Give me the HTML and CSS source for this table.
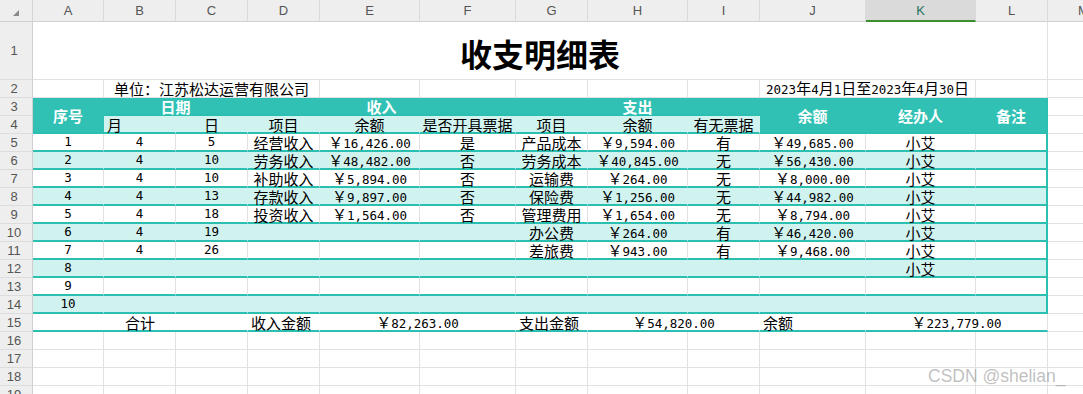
FILE: index.html
```html
<!DOCTYPE html>
<html lang="zh-CN">
<head>
<meta charset="utf-8">
<title>收支明细表</title>
<link rel="stylesheet" href="styles.css">
</head>
<body>
<div class="sheet">
  <div class="r">
    <div class="corner"><span class="tri"></span></div>
    <div class="hd">A</div><div class="hd">B</div><div class="hd">C</div><div class="hd">D</div><div class="hd">E</div><div class="hd">F</div><div class="hd">G</div><div class="hd">H</div><div class="hd">I</div><div class="hd">J</div><div class="hd sel">K</div><div class="hd">L</div><div class="hd">M</div>
  </div>
  <div class="r">
    <div class="rn">1</div><div class="c s12 title">收支明细表</div><div class="c"></div>
  </div>
  <div class="r">
    <div class="rn">2</div><div class="c"></div><div class="c s3">单位：江苏松达运营有限公司</div><div class="c"></div><div class="c"></div><div class="c"></div><div class="c"></div><div class="c"></div>
    <div class="c s2"><span><span class="n">2023</span>年<span class="n">4</span>月<span class="n">1</span>日至<span class="n">2023</span>年<span class="n">4</span>月<span class="n">30</span>日</span></div><div class="c"></div><div class="c"></div>
  </div>
  <div class="r">
    <div class="rn">3</div>
    <div class="c th rs2">序号</div><div class="c th s2">日期</div><div class="c th s3">收入</div><div class="c th s3">支出</div>
    <div class="c th rs2">余额</div><div class="c th rs2">经办人</div><div class="c th rs2 lth">备注</div><div class="c"></div>
  </div>
  <div class="r">
    <div class="rn">4</div>
    <div class="c sh left">月</div><div class="c sh">日</div><div class="c sh">项目</div><div class="c sh">余额</div><div class="c sh">是否开具票据</div><div class="c sh">项目</div><div class="c sh">余额</div><div class="c sh">有无票据</div><div class="c"></div>
  </div>
  <div class="r d">
    <div class="rn">5</div>
    <div class="c n">1</div><div class="c n">4</div><div class="c n">5</div><div class="c">经营收入</div><div class="c"><span>￥<span class="n">16,426.00</span></span></div><div class="c">是</div><div class="c">产品成本</div><div class="c"><span>￥<span class="n">9,594.00</span></span></div><div class="c">有</div><div class="c"><span>￥<span class="n">49,685.00</span></span></div><div class="c">小艾</div><div class="c lc"></div><div class="c x"></div>
  </div>
  <div class="r d a">
    <div class="rn">6</div>
    <div class="c n">2</div><div class="c n">4</div><div class="c n">10</div><div class="c">劳务收入</div><div class="c"><span>￥<span class="n">48,482.00</span></span></div><div class="c">否</div><div class="c">劳务成本</div><div class="c"><span>￥<span class="n">40,845.00</span></span></div><div class="c">无</div><div class="c"><span>￥<span class="n">56,430.00</span></span></div><div class="c">小艾</div><div class="c lc"></div><div class="c x"></div>
  </div>
  <div class="r d">
    <div class="rn">7</div>
    <div class="c n">3</div><div class="c n">4</div><div class="c n">10</div><div class="c">补助收入</div><div class="c"><span>￥<span class="n">5,894.00</span></span></div><div class="c">否</div><div class="c">运输费</div><div class="c"><span>￥<span class="n">264.00</span></span></div><div class="c">无</div><div class="c"><span>￥<span class="n">8,000.00</span></span></div><div class="c">小艾</div><div class="c lc"></div><div class="c x"></div>
  </div>
  <div class="r d a">
    <div class="rn">8</div>
    <div class="c n">4</div><div class="c n">4</div><div class="c n">13</div><div class="c">存款收入</div><div class="c"><span>￥<span class="n">9,897.00</span></span></div><div class="c">否</div><div class="c">保险费</div><div class="c"><span>￥<span class="n">1,256.00</span></span></div><div class="c">无</div><div class="c"><span>￥<span class="n">44,982.00</span></span></div><div class="c">小艾</div><div class="c lc"></div><div class="c x"></div>
  </div>
  <div class="r d">
    <div class="rn">9</div>
    <div class="c n">5</div><div class="c n">4</div><div class="c n">18</div><div class="c">投资收入</div><div class="c"><span>￥<span class="n">1,564.00</span></span></div><div class="c">否</div><div class="c">管理费用</div><div class="c"><span>￥<span class="n">1,654.00</span></span></div><div class="c">无</div><div class="c"><span>￥<span class="n">8,794.00</span></span></div><div class="c">小艾</div><div class="c lc"></div><div class="c x"></div>
  </div>
  <div class="r d a">
    <div class="rn">10</div>
    <div class="c n">6</div><div class="c n">4</div><div class="c n">19</div><div class="c"></div><div class="c"></div><div class="c"></div><div class="c">办公费</div><div class="c"><span>￥<span class="n">264.00</span></span></div><div class="c">有</div><div class="c"><span>￥<span class="n">46,420.00</span></span></div><div class="c">小艾</div><div class="c lc"></div><div class="c x"></div>
  </div>
  <div class="r d">
    <div class="rn">11</div>
    <div class="c n">7</div><div class="c n">4</div><div class="c n">26</div><div class="c"></div><div class="c"></div><div class="c"></div><div class="c">差旅费</div><div class="c"><span>￥<span class="n">943.00</span></span></div><div class="c">有</div><div class="c"><span>￥<span class="n">9,468.00</span></span></div><div class="c">小艾</div><div class="c lc"></div><div class="c x"></div>
  </div>
  <div class="r d a">
    <div class="rn">12</div>
    <div class="c n">8</div><div class="c"></div><div class="c"></div><div class="c"></div><div class="c"></div><div class="c"></div><div class="c"></div><div class="c"></div><div class="c"></div><div class="c"></div><div class="c">小艾</div><div class="c lc"></div><div class="c x"></div>
  </div>
  <div class="r d">
    <div class="rn">13</div>
    <div class="c n">9</div><div class="c"></div><div class="c"></div><div class="c"></div><div class="c"></div><div class="c"></div><div class="c"></div><div class="c"></div><div class="c"></div><div class="c"></div><div class="c"></div><div class="c lc"></div><div class="c x"></div>
  </div>
  <div class="r d a">
    <div class="rn">14</div>
    <div class="c n">10</div><div class="c"></div><div class="c"></div><div class="c"></div><div class="c"></div><div class="c"></div><div class="c"></div><div class="c"></div><div class="c"></div><div class="c"></div><div class="c"></div><div class="c lc"></div><div class="c x"></div>
  </div>
  <div class="r t">
    <div class="rn">15</div>
    <div class="c s3">合计</div><div class="c left">收入金额</div><div class="c s2"><span>￥<span class="n">82,263.00</span></span></div><div class="c left">支出金额</div><div class="c s2"><span>￥<span class="n">54,820.00</span></span></div><div class="c left">余额</div><div class="c s2 lc"><span>￥<span class="n">223,779.00</span></span></div><div class="c x"></div>
  </div>
  <div class="r"><div class="rn">16</div><div class="c"></div><div class="c"></div><div class="c"></div><div class="c"></div><div class="c"></div><div class="c"></div><div class="c"></div><div class="c"></div><div class="c"></div><div class="c"></div><div class="c"></div><div class="c"></div><div class="c"></div></div>
  <div class="r"><div class="rn">17</div><div class="c"></div><div class="c"></div><div class="c"></div><div class="c"></div><div class="c"></div><div class="c"></div><div class="c"></div><div class="c"></div><div class="c"></div><div class="c"></div><div class="c"></div><div class="c"></div><div class="c"></div></div>
  <div class="r"><div class="rn">18</div><div class="c"></div><div class="c"></div><div class="c"></div><div class="c"></div><div class="c"></div><div class="c"></div><div class="c"></div><div class="c"></div><div class="c"></div><div class="c"></div><div class="c"></div><div class="c"></div><div class="c"></div></div>
  <div class="r"><div class="rn">19</div><div class="c"></div><div class="c"></div><div class="c"></div><div class="c"></div><div class="c"></div><div class="c"></div><div class="c"></div><div class="c"></div><div class="c"></div><div class="c"></div><div class="c"></div><div class="c"></div><div class="c"></div></div>
</div>
<div class="wm">CSDN @shelian_</div>
</body>
</html>
```

FILE: styles.css
```css
* { box-sizing: border-box; margin: 0; padding: 0; }
html, body { width: 1083px; height: 394px; overflow: hidden; background: #fff; }
body { position: relative; }

.sheet {
  display: grid;
  grid-template-columns: 33px 71px 72px 72px 72px 100px 96px 72px 100px 72px 106px 110px 72px 72px;
  grid-template-rows: 22px 58px repeat(18, 18px);
  font-family: "Noto Sans CJK SC", sans-serif;
  font-size: 15px;
  color: #000;
}
.r { display: contents; }

.corner {
  background: #eeeeee;
  border-right: 1px solid #d6d6d6;
  border-bottom: 1px solid #d0d0d0;
  padding: 10px 0 0 13px;
}
.tri {
  display: block;
  width: 0; height: 0;
  border-left: 6px solid transparent;
  border-bottom: 6px solid #8a8a8a;
}
.hd {
  background: #eeeeee;
  border-right: 1px solid #dadada;
  border-bottom: 1px solid #d0d0d0;
  display: flex; align-items: center; justify-content: center;
  font: 13px/1 "Liberation Sans", sans-serif;
  color: #555;
}
.hd.sel { background: #dadada; border-bottom: 2px solid #3d8f2d; color: #1e7361; }
.rn {
  background: #eeeeee;
  border-right: 1px solid #d0d0d0;
  border-bottom: 1px solid #dcdcdc;
  display: flex; align-items: center; justify-content: center;
  padding-right: 4px;
  font: 13px/1 "Liberation Sans", sans-serif;
  color: #555;
}

.c {
  border-right: 1px solid #e2e2e2;
  border-bottom: 1px solid #e2e2e2;
  display: flex; align-items: center; justify-content: center;
  white-space: nowrap;
  line-height: 1;
  min-width: 0;
}
.s2 { grid-column: span 2; }
.s3 { grid-column: span 3; }
.s12 { grid-column: span 12; }
.rs2 { grid-row: span 2; }
.left { justify-content: flex-start; padding-left: 3px; }
.n { font-family: "DejaVu Sans Mono", monospace; font-size: 12.5px; }

.title { font-size: 32px; font-weight: bold; padding-top: 4px; }

.th {
  background: #31c1b4;
  color: #fff;
  font-weight: bold;
  border-right-color: #31c1b4;
  border-bottom: 2px solid #2bbfb2;
}
.sh {
  background: #d1f3f0;
  border-right-color: #d1f3f0;
  border-bottom: 2px solid #2bbfb2;
}
.lth { border-right: 2px solid #2bbfb2; }

.d > .c { border-bottom: 2px solid #2bbfb2; padding-top: 1px; }
.d.a > .c { background: #d1f3f0; border-right-color: #d1f3f0; }
.d > .c.lc { border-right: 2px solid #2bbfb2; }
.d > .c.x { background: none; border-right: 1px solid #e2e2e2; border-bottom: 1px solid #e2e2e2; }

.t > .c { border-right-color: #fff; border-bottom: 2px solid #2bbfb2; padding-top: 1px; }
.t > .c.lc { border-right-color: #e2e2e2; }
.t > .c.x { border-right-color: #e2e2e2; border-bottom: 1px solid #e2e2e2; }

.wm {
  position: absolute;
  left: 928px;
  top: 366px;
  font: 17.5px/20px "Liberation Sans", sans-serif;
  color: rgba(150, 150, 150, 0.6);
}
```
